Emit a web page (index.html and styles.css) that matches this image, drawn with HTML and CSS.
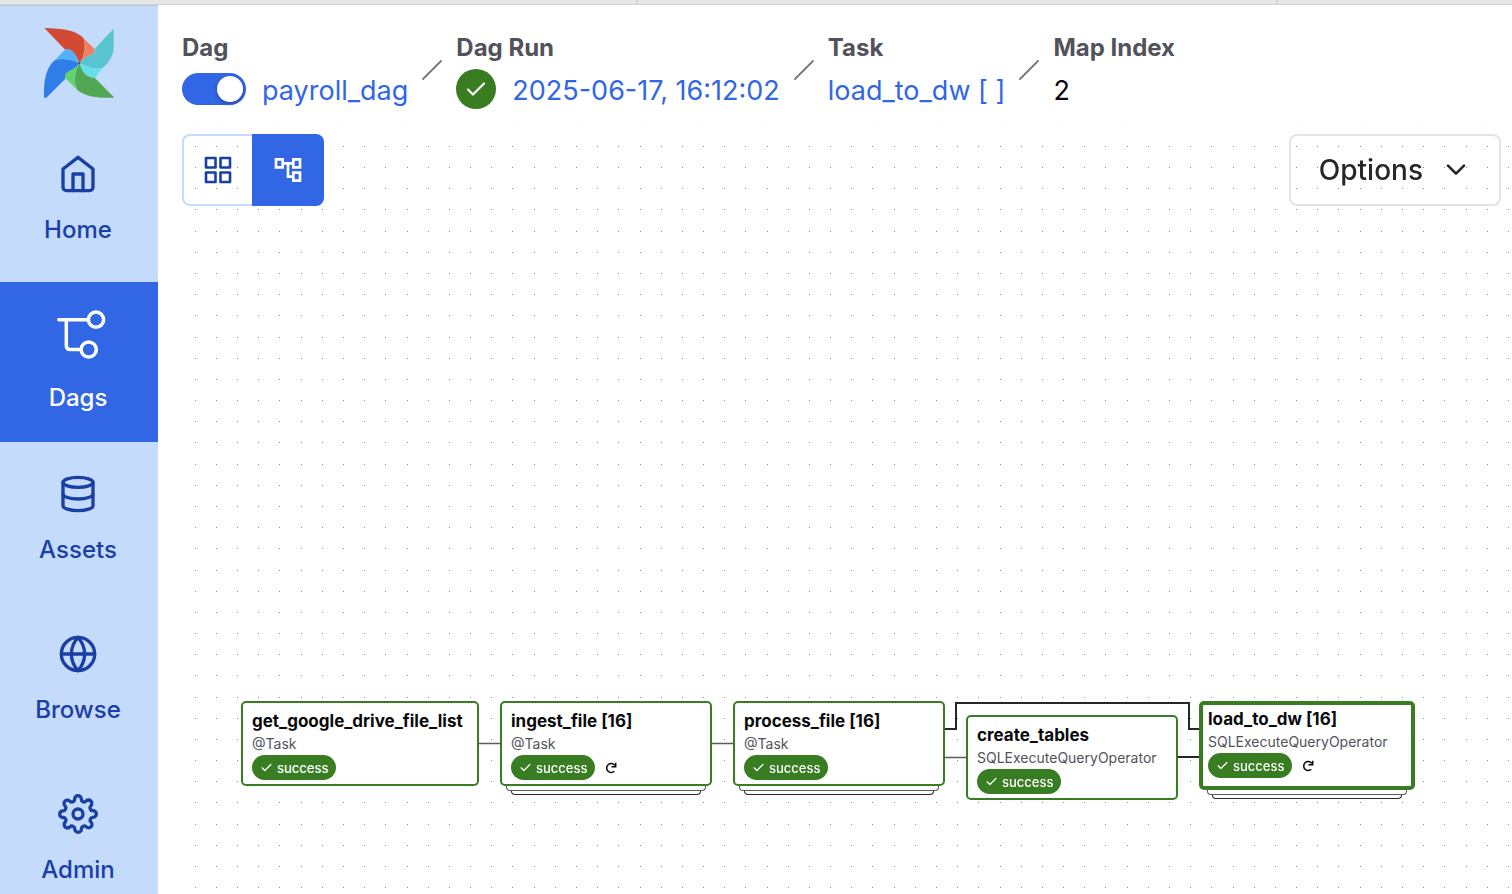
FILE: index.html
```html
<!DOCTYPE html>
<html lang="en">
<head>
<meta charset="utf-8">
<meta name="viewport" content="width=device-width, initial-scale=1">
<title>payroll_dag - Airflow</title>
<link rel="stylesheet" href="styles.css">
</head>
<body>
<svg class="defs" aria-hidden="true">
  <symbol id="check" viewBox="0 0 20 16"><path d="M2 8.500l5 5L18 2.500" fill="none" stroke="currentColor" stroke-width="2.200" stroke-linecap="round" stroke-linejoin="round"/></symbol>
  <symbol id="redo" viewBox="0 0 12 12"><path d="M9.800 3.300A4.500 4.500 0 1 0 9.300 9.300M10.700.8V4.800H6.500" fill="none" stroke="currentColor" stroke-width="1.500"/></symbol>
  <symbol id="slash" viewBox="0 0 20 20"><path d="M1 19L19 1" stroke="currentColor" stroke-width="1.800" stroke-linecap="round"/></symbol>
</svg>
<div class="strip"><span class="tab"></span><span class="tab"></span><span class="tab"></span></div>
<div class="app">
  <nav class="sidebar" aria-label="Main">
    <a class="logo" href="#" aria-label="Airflow">
      <svg viewBox="133 84 210 210" aria-hidden="true">
        <path fill="#58c4d0" d="M342 86V145C340 170 326 190 308 205C283 209 262 201 240 190C248 177 258 170 270 165C284 160 288 155 285 146Z"/>
        <path fill="#67dfeb" d="M240 190C262 201 283 209 308 205L286 234C258 233 246 214 240 190Z"/>
        <path fill="#50a854" d="M342 293C295 294 258 291 233 270C221 248 223 220 240 190C246 214 258 233 286 234L342 291Z"/>
        <path fill="#62d269" d="M233 270L197 235C193 226 199 216 213 211C225 206 233 200 240 190C223 220 221 248 233 270Z"/>
        <path fill="#2e7de8" d="M133 293C132 248 136 211 162 183C178 173 215 176 240 190C233 200 225 206 213 211C199 216 193 226 197 236L140 293Z"/>
        <path fill="#51b2f7" d="M162 184L195 150C198 147 201 147 205 147C222 150 232 170 240 190C215 176 180 172 162 184Z"/>
        <path fill="#d24a31" d="M134 84C190 86 228 90 252 115C259 140 255 166 240 190C232 170 222 150 205 147L195 148Z"/>
        <path fill="#ee7f62" d="M250 113L281 143C290 154 284 160 270 165C257 170 248 177 240 190C255 166 259 140 250 113Z"/>
        <circle cx="239" cy="190" r="3" fill="#46484d"/>
      </svg>
    </a>
    <a class="item" href="#">
      <svg class="icon" viewBox="0 0 24 24" aria-hidden="true"><path d="M3 9l9-7 9 7v11a2 2 0 0 1-2 2H5a2 2 0 0 1-2-2z"/><path d="M9 22V12h6v10"/></svg>
      <span>Home</span>
    </a>
    <a class="item active" href="#" aria-current="page">
      <svg class="icon-large" viewBox="0 0 56 56" aria-hidden="true"><path d="M8.700 13.700H37M16.300 13.700V39.500Q16.300 43.500 20.300 43.500H29.500"/><circle cx="46" cy="13.700" r="7.600"/><circle cx="38.700" cy="43.500" r="7.600"/></svg>
      <span>Dags</span>
    </a>
    <a class="item" href="#">
      <svg class="icon" viewBox="0 0 24 24" aria-hidden="true"><ellipse cx="12" cy="5" rx="9" ry="3"/><path d="M21 12c0 1.660-4 3-9 3s-9-1.340-9-3"/><path d="M3 5v14c0 1.660 4 3 9 3s9-1.340 9-3V5"/></svg>
      <span>Assets</span>
    </a>
    <a class="item" href="#">
      <svg class="icon" viewBox="0 0 24 24" aria-hidden="true"><circle cx="12" cy="12" r="10"/><path d="M2 12h20M12 2a15.300 15.300 0 0 1 4 10 15.300 15.300 0 0 1-4 10 15.300 15.300 0 0 1-4-10 15.300 15.300 0 0 1 4-10z"/></svg>
      <span>Browse</span>
    </a>
    <a class="item" href="#">
      <svg class="icon" viewBox="0 0 24 24" aria-hidden="true"><circle cx="12" cy="12" r="3"/><path d="M19.400 15a1.650 1.650 0 0 0 .33 1.820l.06.06a2 2 0 0 1 0 2.830 2 2 0 0 1-2.830 0l-.06-.06a1.650 1.650 0 0 0-1.820-.33 1.650 1.650 0 0 0-1 1.510V21a2 2 0 0 1-2 2 2 2 0 0 1-2-2v-.09A1.650 1.650 0 0 0 9 19.400a1.650 1.650 0 0 0-1.820.33l-.06.06a2 2 0 0 1-2.830 0 2 2 0 0 1 0-2.830l.06-.06a1.650 1.650 0 0 0 .33-1.820 1.650 1.650 0 0 0-1.510-1H3a2 2 0 0 1-2-2 2 2 0 0 1 2-2h.09A1.650 1.650 0 0 0 4.600 9a1.650 1.650 0 0 0-.33-1.820l-.06-.06a2 2 0 0 1 0-2.830 2 2 0 0 1 2.830 0l.06.06a1.650 1.650 0 0 0 1.820.33H9a1.650 1.650 0 0 0 1-1.510V3a2 2 0 0 1 2-2 2 2 0 0 1 2 2v.09a1.650 1.650 0 0 0 1 1.510 1.650 1.650 0 0 0 1.820-.33l.06-.06a2 2 0 0 1 2.830 0 2 2 0 0 1 0 2.830l-.06.06a1.650 1.650 0 0 0-.33 1.820V9a1.650 1.650 0 0 0 1.510 1H21a2 2 0 0 1 2 2 2 2 0 0 1-2 2h-.09a1.650 1.650 0 0 0-1.510 1z"/></svg>
      <span>Admin</span>
    </a>
  </nav>
  <main class="main">
    <header class="crumbs">
      <div class="crumb">
        <label class="crumb-label" for="dag-toggle">Dag</label>
        <div class="crumb-value"><input class="switch" type="checkbox" role="switch" id="dag-toggle" checked><a href="#">payroll_dag</a></div>
      </div>
      <svg class="slash" aria-hidden="true"><use href="#slash"/></svg>
      <div class="crumb">
        <span class="crumb-label">Dag Run</span>
        <div class="crumb-value"><span class="state"><svg aria-hidden="true"><use href="#check"/></svg></span><a href="#">2025-06-17, 16:12:02</a></div>
      </div>
      <svg class="slash" aria-hidden="true"><use href="#slash"/></svg>
      <div class="crumb">
        <span class="crumb-label">Task</span>
        <div class="crumb-value"><a href="#">load_to_dw [ ]</a></div>
      </div>
      <svg class="slash" aria-hidden="true"><use href="#slash"/></svg>
      <div class="crumb">
        <span class="crumb-label">Map Index</span>
        <div class="crumb-value"><span>2</span></div>
      </div>
    </header>
    <section class="graph" aria-label="Graph">
      <canvas class="dots" id="dots"></canvas>
      <svg class="edges" aria-hidden="true">
        <g fill="none" stroke="#5b5b5f" stroke-width="1.300"><path d="M297 617.500H318M530 617.500H551M763 631.500H784"/></g>
        <g fill="none" stroke="#27272a" stroke-width="2"><path d="M763 603H774V577H1007V603H1017M996 631H1017"/></g>
      </svg>
      <article class="node first">
        <h3>get_google_drive_file_list</h3><p>@Task</p>
        <div class="status"><span class="pill"><svg aria-hidden="true"><use href="#check"/></svg>success</span></div>
      </article>
      <article class="node mapped ingest">
        <h3>ingest_file [16]</h3><p>@Task</p>
        <div class="status"><span class="pill"><svg aria-hidden="true"><use href="#check"/></svg>success</span><svg class="redo" aria-hidden="true"><use href="#redo"/></svg></div>
      </article>
      <article class="node mapped process">
        <h3>process_file [16]</h3><p>@Task</p>
        <div class="status"><span class="pill"><svg aria-hidden="true"><use href="#check"/></svg>success</span></div>
      </article>
      <article class="node create">
        <h3>create_tables</h3><p>SQLExecuteQueryOperator</p>
        <div class="status"><span class="pill"><svg aria-hidden="true"><use href="#check"/></svg>success</span></div>
      </article>
      <article class="node mapped selected load">
        <h3>load_to_dw [16]</h3><p>SQLExecuteQueryOperator</p>
        <div class="status"><span class="pill"><svg aria-hidden="true"><use href="#check"/></svg>success</span><svg class="redo" aria-hidden="true"><use href="#redo"/></svg></div>
      </article>
      <div class="toolbar">
        <div class="views">
          <button class="view" type="button" aria-label="Grid view"><svg viewBox="0 0 32 32" aria-hidden="true"><path fill="none" stroke="currentColor" stroke-width="2.600" stroke-linejoin="round" d="M4 4h9.500v9.500H4zM18.500 4H28v9.500h-9.500zM4 18.500h9.500V28H4zM18.500 18.500H28V28h-9.500z"/></svg></button>
          <button class="view on" type="button" aria-label="Graph view" aria-pressed="true"><svg viewBox="0 0 24 24" aria-hidden="true"><path fill="currentColor" d="M22 11V3h-7v3H9V3H2v8h7V8h2v10h4v3h7v-8h-7v3h-2V8h2v3h7zM7 9H4V5h3v4zm10 6h3v4h-3v-4zm0-10h3v4h-3V5z"/></svg></button>
        </div>
        <button class="options" type="button">Options<svg viewBox="0 0 20 12" aria-hidden="true"><path d="M2 1.700L10 9.700L18 1.700" fill="none" stroke="currentColor" stroke-width="2.600" stroke-linecap="round" stroke-linejoin="round"/></svg></button>
      </div>
    </section>
  </main>
</div>
<script src="dots.js"></script>
</body>
</html>
```
FILE: styles.css
```css
* { box-sizing: border-box; }

body {
  margin: 0;
  height: 100vh;
  display: flex;
  flex-direction: column;
  overflow: hidden;
  background: #fff;
  color: #09090b;
  font-family: Inter, "Liberation Sans", sans-serif;
}

a { color: inherit; text-decoration: none; }
h3, p { margin: 0; }
svg { display: block; flex: none; }
button { font: inherit; background: none; cursor: pointer; }
.defs { position: absolute; width: 0; height: 0; }

.strip {
  display: flex;
  flex: none;
  height: 5px;
  background: #e6e6e4;
  border-bottom: 1px solid #d2d2d2;
}
.tab { flex: 0 0 640px; border-right: 2px solid #d2d2d0; }
.tab:first-child { flex-basis: 638px; }
.tab:last-child { flex: 1; border: 0; }

.app { display: flex; flex: 1; min-height: 0; }

.sidebar {
  flex: none;
  width: 158px;
  overflow: hidden;
  background: #c5dbfb;
  color: #1a3fa4;
  border-top: 1px solid #b4c8e8;
}
.logo { display: flex; justify-content: center; height: 116px; padding-top: 22px; }
.logo svg { width: 70px; height: 70px; }
.item {
  height: 160px;
  padding: 0 2px 2px 0;
  display: flex;
  flex-direction: column;
  align-items: center;
  justify-content: center;
  gap: 18px;
  font-size: 24px;
  line-height: 36px;
  font-weight: 500;
}
.item svg { fill: none; stroke: currentColor; stroke-width: 2; stroke-linecap: round; stroke-linejoin: round; }
.icon { width: 40px; height: 40px; }
.item .icon-large { width: 56px; height: 56px; stroke-width: 3.5; }
.active { background: #3166e4; color: #fff; }

.main { flex: 1; min-width: 0; display: flex; flex-direction: column; padding-left: 24px; }

.crumbs { flex: none; display: flex; align-items: center; gap: 14px; height: 121px; padding-top: 17px; }
.crumb-label { display: block; font-size: 24px; line-height: 30px; font-weight: 700; color: #52525b; }
.crumb-value { display: flex; align-items: center; gap: 16px; height: 52px; font-size: 27px; line-height: 34px; }
.crumb-value > :last-child { padding-top: 4px; }
.crumb-value a { color: #3166e4; }
.slash { width: 20px; height: 20px; margin-bottom: 8px; color: #77777c; }
.switch {
  appearance: none;
  width: 64px;
  height: 32px;
  margin: 0;
  padding: 3px;
  border-radius: 16px;
  background: #3166e4;
  display: flex;
  justify-content: flex-end;
}
.switch::before {
  content: "";
  width: 26px;
  height: 26px;
  border-radius: 50%;
  background: #fff;
  box-shadow: 0 2px 4px rgb(0 0 0 / 30%);
}
.state { width: 40px; height: 40px; border-radius: 50%; background: #397d22; color: #fff; display: grid; place-items: center; }
.state svg { width: 20px; height: 16px; }

.graph { position: relative; flex: 1; min-height: 0; overflow: hidden; }
.dots, .edges { position: absolute; inset: 0; width: 100%; height: 100%; }

.toolbar { position: relative; display: flex; justify-content: space-between; padding: 8px 11px 0 0; }
.views { display: flex; }
.view {
  display: grid;
  place-items: center;
  width: 70px;
  height: 72px;
  padding: 0;
  border: 2px solid #c5dbfb;
  border-right: 0;
  border-radius: 8px 0 0 8px;
  color: #1a3fa4;
}
.view svg { width: 32px; height: 32px; }
.view.on { width: 72px; border: 0; border-radius: 0 8px 8px 0; background: #3166e4; color: #fff; }
.options {
  display: flex;
  align-items: center;
  gap: 23px;
  height: 72px;
  padding: 0 33px 0 28px;
  border: 2px solid #e4e4e7;
  border-radius: 8px;
  font-size: 28px;
  font-weight: 500;
  color: #27272a;
}
.options svg { width: 20px; height: 12px; }

.node {
  position: absolute;
  top: 575px;
  width: 212px;
  height: 85px;
  padding: 7px 9px;
  border: 2px solid #397d22;
  border-radius: 5px;
  background: #fff;
}
.node h3 { font-size: 17px; line-height: 22px; font-weight: 700; white-space: nowrap; }
.node p { font-size: 14px; line-height: 23px; color: #52525b; }
.first { left: 59px; width: 238px; }
.ingest { left: 318px; }
.process { left: 551px; }
.create { left: 784px; top: 589px; }
.load { left: 1017px; }
.selected { width: 216px; height: 89px; padding: 3px 5px; border-width: 4px; }

.mapped::before, .mapped::after {
  content: "";
  position: absolute;
  top: calc(100% + 2px);
  border: 1px solid #27272a;
  border-top: 0;
  border-radius: 0 0 4px 4px;
  background: #fff;
}
.mapped::before { left: 9px; right: 9px; height: 8px; }
.mapped::after { left: 4px; right: 4px; height: 4px; border-color: #5b5b5f; }
.selected::before, .selected::after { top: calc(100% + 4px); }

.status { display: flex; align-items: center; gap: 10px; }
.pill {
  display: flex;
  align-items: center;
  gap: 5px;
  height: 25px;
  padding: 0 8px 0 9px;
  border-radius: 13px;
  background: #397d22;
  color: #fff;
  font-size: 13px;
  font-weight: 500;
}
.pill svg { width: 11px; height: 9px; }
.redo { width: 12px; height: 12px; }
```
FILE: dots.js
```js
const canvas = document.getElementById("dots");

function drawDots() {
  const pitch = 21.18;
  canvas.width = canvas.clientWidth;
  canvas.height = canvas.clientHeight;
  const ctx = canvas.getContext("2d");
  ctx.fillStyle = "#ededed";
  for (let x = 13.22; x < canvas.width; x += pitch) ctx.fillRect(Math.floor(x), 0, 1, 1);
  ctx.fillStyle = "#8c8c91";
  for (let y = 20.4; y < canvas.height; y += pitch) {
    for (let x = 13.22; x < canvas.width; x += pitch) {
      ctx.fillRect(Math.floor(x), Math.floor(y), 1, 1);
    }
  }
}

drawDots();
window.addEventListener("resize", drawDots);
```
